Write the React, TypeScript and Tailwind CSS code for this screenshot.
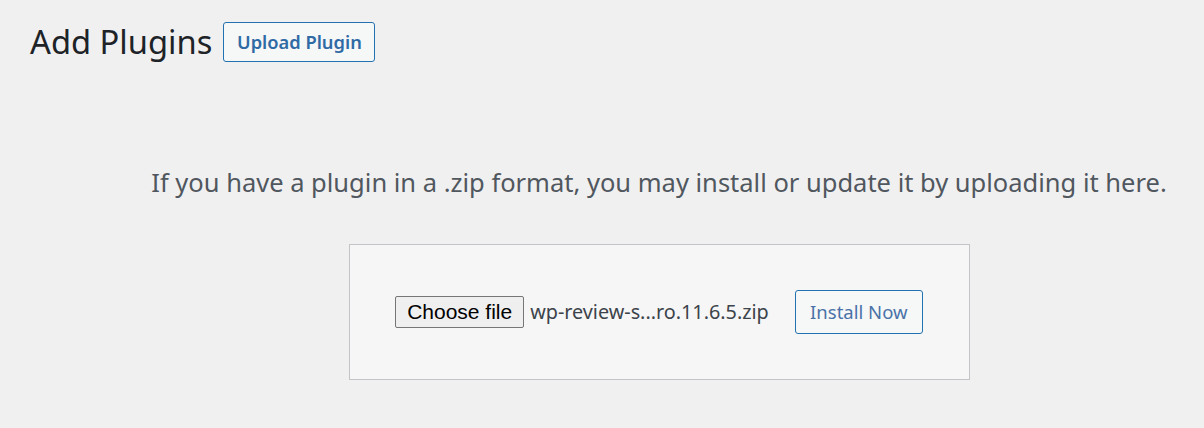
import React from "react";

const segoe = "font-['Noto_Sans',sans-serif]";

const App: React.FC = () => {
  return (
    <div className={`h-[428px] w-[1204px] overflow-hidden bg-[#f0f0f1] ${segoe}`}>
      <div className="w-[1288px] pl-[30px]">
        <div className="flex items-center gap-[11px] pt-[21px]">
          <h1 className="text-[32.7px] leading-[42px] font-normal text-[#1d2327]">Add Plugins</h1>
          <button className="h-[40px] w-[152px] rounded-[3px] border border-[#2271b1] bg-[#f6f7f7] text-[18.3px] font-semibold text-[#2f6aa5]">
            Upload Plugin
          </button>
        </div>

        <p className="mt-[104px] text-center text-[25.5px] leading-[30px] text-[#50575e]">
          If you have a plugin in a .zip format, you may install or update it by uploading it here.
        </p>

        <div className="mx-auto mt-[47px] flex h-[136px] w-[621px] items-center justify-center border border-[#c3c4c7] bg-[#f6f6f6]">
          <div className="flex items-center">
            <span className="flex h-[32px] w-[129px] items-center justify-center rounded-[2px] border border-[#767676] bg-[#efefef] font-['Liberation_Sans',sans-serif] text-[21px] text-black">
              Choose file
            </span>
            <span className="ml-[6px] text-[19.8px] text-[#3c434a]">wp-review-s...ro.11.6.5.zip</span>
          </div>
          <button className="ml-[26px] h-[44px] w-[128px] rounded-[3px] border border-[#2271b1] bg-[#f6f7f7] text-[18.5px] text-[#4a72a8]">
            Install Now
          </button>
        </div>
      </div>
    </div>
  );
};

export default App;
